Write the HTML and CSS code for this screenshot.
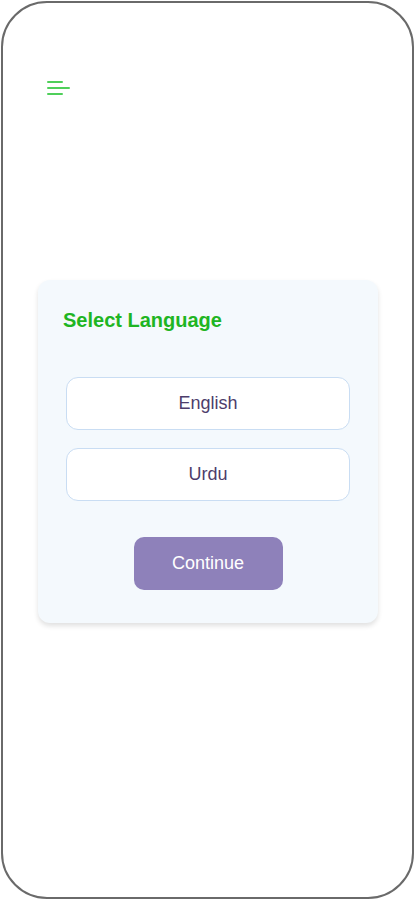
FILE: index.html
```html
<!DOCTYPE html>
<html>
<head>
<meta charset="utf-8">
<link rel="stylesheet" href="styles.css">
</head>
<body>
<div class="phone">
  <div class="topbar">
    <svg class="menu" width="24" height="16" viewBox="0 0 24 16">
      <line x1="1" y1="2" x2="15" y2="2" />
      <line x1="1" y1="8" x2="22" y2="8" />
      <line x1="1" y1="14" x2="15" y2="14" />
    </svg>
  </div>
  <div class="card">
    <h2 class="title">Select Language</h2>
    <div class="options">
      <button class="option">English</button>
      <button class="option">Urdu</button>
    </div>
    <div class="actions">
      <button class="continue">Continue</button>
    </div>
  </div>
</div>
</body>
</html>
```
FILE: styles.css
```css
html, body {
  margin: 0;
  padding: 0;
  background: #ffffff;
  font-family: "Liberation Sans", Arial, sans-serif;
}
.phone {
  box-sizing: border-box;
  width: 413px;
  height: 898px;
  margin: 1px;
  border: 2px solid #6a6a6a;
  border-radius: 46px;
  padding: 77px 0 0 35px;
}
.topbar {
  height: 16px;
  padding-left: 9px;
}
.menu {
  display: block;
  stroke: #4fcf5a;
  stroke-width: 2;
  stroke-linecap: round;
}
.card {
  box-sizing: border-box;
  width: 340px;
  margin-top: 184px;
  background: #f4f9fd;
  border-radius: 12px;
  box-shadow: 0 3px 5px rgba(0, 0, 0, 0.12);
  padding: 29px 28px 33px 28px;
}
.title {
  margin: 0 0 0 -3px;
  font-size: 20px;
  font-weight: bold;
  line-height: 22px;
  color: #1eb523;
}
.options {
  display: flex;
  flex-direction: column;
  gap: 18px;
  margin-top: 46px;
}
.option {
  height: 53px;
  width: 284px;
  background: #ffffff;
  border: 1px solid #c9ddf3;
  border-radius: 12px;
  font-family: "Liberation Sans", Arial, sans-serif;
  font-size: 18px;
  color: #4d3d6b;
}
.actions {
  display: flex;
  justify-content: center;
  margin-top: 36px;
}
.continue {
  width: 149px;
  height: 53px;
  border: none;
  border-radius: 10px;
  background: #8e81ba;
  color: #ffffff;
  font-family: "Liberation Sans", Arial, sans-serif;
  font-size: 18px;
}
```
